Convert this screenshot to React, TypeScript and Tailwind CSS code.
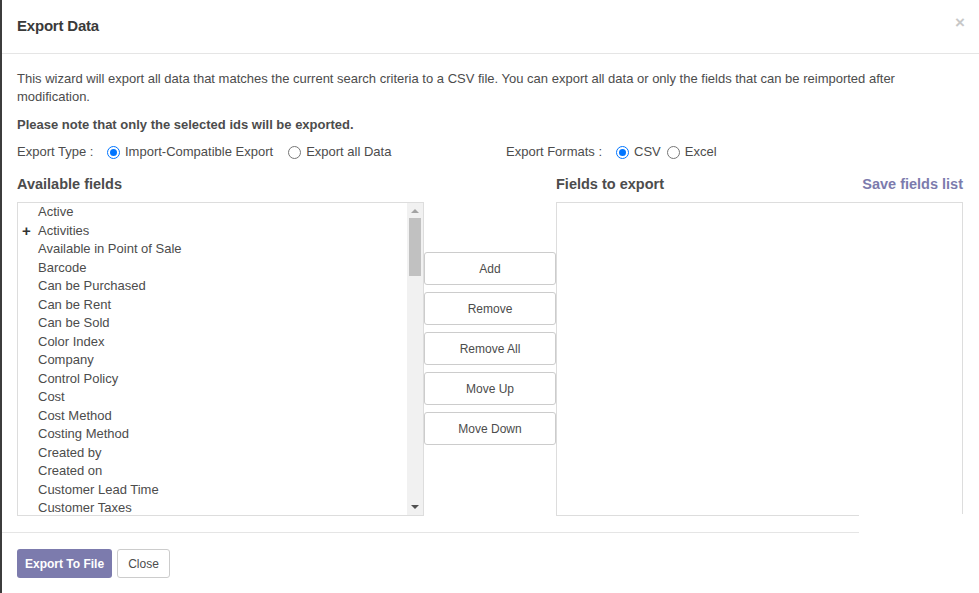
import React from 'react';

const fields = [
  'Active',
  'Activities',
  'Available in Point of Sale',
  'Barcode',
  'Can be Purchased',
  'Can be Rent',
  'Can be Sold',
  'Color Index',
  'Company',
  'Control Policy',
  'Cost',
  'Cost Method',
  'Costing Method',
  'Created by',
  'Created on',
  'Customer Lead Time',
  'Customer Taxes',
];

function Radio({ checked, label }: { checked?: boolean; label: string }) {
  return (
    <label className="flex items-center gap-[5px]">
      <span
        className={
          checked
            ? 'w-[13px] h-[13px] rounded-full border-[1px] border-[#0075ff] flex items-center justify-center'
            : 'w-[13px] h-[13px] rounded-full border-[1px] border-[#767676]'
        }
      >
        {checked && <span className="w-[7px] h-[7px] rounded-full bg-[#0075ff]" />}
      </span>
      <span>{label}</span>
    </label>
  );
}

function SideButton({ children }: { children: React.ReactNode }) {
  return (
    <button className="h-[33px] w-full border border-[#cccccc] rounded-[3px] bg-white text-[12px] text-[#4c4c4c]">
      {children}
    </button>
  );
}

export default function App() {
  return (
    <div
      className="relative w-[979px] h-[593px] bg-white border-l-2 border-[#3c3c3c] overflow-hidden text-[#4c4c4c]"
      style={{ fontFamily: '"Liberation Sans", Arial, sans-serif' }}
    >
      {/* header */}
      <div className="h-[54px] flex items-center justify-between pl-[15px] pr-[14px] border-b border-[#e5e5e5]">
        <h4 className="text-[15px] font-bold text-[#3a3a3a] tracking-[-0.2px]">Export Data</h4>
        <span className="text-[17px] font-bold text-[#c8c8c8] leading-none -mt-[9px]">×</span>
      </div>

      {/* body */}
      <div className="pl-[15px] pr-[15px] pt-[16px] text-[13px]">
        <p className="leading-[18px]">
          This wizard will export all data that matches the current search criteria to a CSV file. You can export all data or only the fields that can be reimported after modification.
        </p>
        <p className="mt-[10px] font-bold leading-[18px]">Please note that only the selected ids will be exported.</p>

        <div className="mt-[9px] flex leading-[18px]">
          <div className="w-[489px] flex items-center">
            <span className="w-[90px]">Export Type :</span>
            <div className="flex items-center gap-[15px]">
              <Radio checked label="Import-Compatible Export" />
              <Radio label="Export all Data" />
            </div>
          </div>
          <div className="flex items-center">
            <span className="w-[110px]">Export Formats :</span>
            <div className="flex items-center gap-[6px]">
              <Radio checked label="CSV" />
              <Radio label="Excel" />
            </div>
          </div>
        </div>

        <div className="mt-[13px] grid grid-cols-[407px_132px_407px]">
          <div>
            <h4 className="text-[14.5px] font-bold leading-[20px] text-[#4c4c4c]">Available fields</h4>
            <div className="mt-[8px] h-[314px] border border-[#dddddd] flex">
              <ul className="flex-1 overflow-hidden">
                {fields.map((f) => (
                  <li key={f} className="relative h-[18.5px] leading-[18.5px] pl-[20px] text-[#4c4c4c]">
                    {f === 'Activities' && (
                      <span className="absolute left-[4px] top-0 text-[15px] font-bold text-[#333]">+</span>
                    )}
                    {f}
                  </li>
                ))}
              </ul>
              <div className="w-[16px] bg-[#f1f1f1] flex flex-col items-center">
                <span className="mt-[6px] w-0 h-0 border-l-[4px] border-r-[4px] border-b-[4px] border-l-transparent border-r-transparent border-b-[#a3a3a3]" />
                <div className="mt-[5px] w-[12px] h-[58px] bg-[#c1c1c1]" />
                <div className="flex-1" />
                <span className="mb-[6px] w-0 h-0 border-l-[4px] border-r-[4px] border-t-[4px] border-l-transparent border-r-transparent border-t-[#505050]" />
              </div>
            </div>
          </div>

          <div className="pt-[78px] flex flex-col gap-[7px]">
            <SideButton>Add</SideButton>
            <SideButton>Remove</SideButton>
            <SideButton>Remove All</SideButton>
            <SideButton>Move Up</SideButton>
            <SideButton>Move Down</SideButton>
          </div>

          <div>
            <div className="flex items-center justify-between">
              <h4 className="text-[14.5px] font-bold leading-[20px] text-[#4c4c4c]">Fields to export</h4>
              <a className="text-[14.5px] font-bold leading-[20px] text-[#7c7bad]">Save fields list</a>
            </div>
            <div className="mt-[8px] h-[314px] border border-[#dddddd]" />
          </div>
        </div>
      </div>

      {/* footer */}
      <div className="mt-[16px] w-[857px] border-t border-[#e5e5e5] pl-[15px] pt-[16px] flex gap-[5px]">
        <button className="h-[29px] px-[8px] rounded-[3px] bg-[#7c7bad] text-white text-[12px] font-bold">
          Export To File
        </button>
        <button className="h-[29px] px-[10px] rounded-[3px] border border-[#cccccc] bg-white text-[12px] text-[#4c4c4c]">
          Close
        </button>
      </div>

      {/* cropped corner of the screenshot */}
      <div className="absolute left-[857px] top-[514px] w-[130px] h-[80px] bg-white" />
    </div>
  );
}
